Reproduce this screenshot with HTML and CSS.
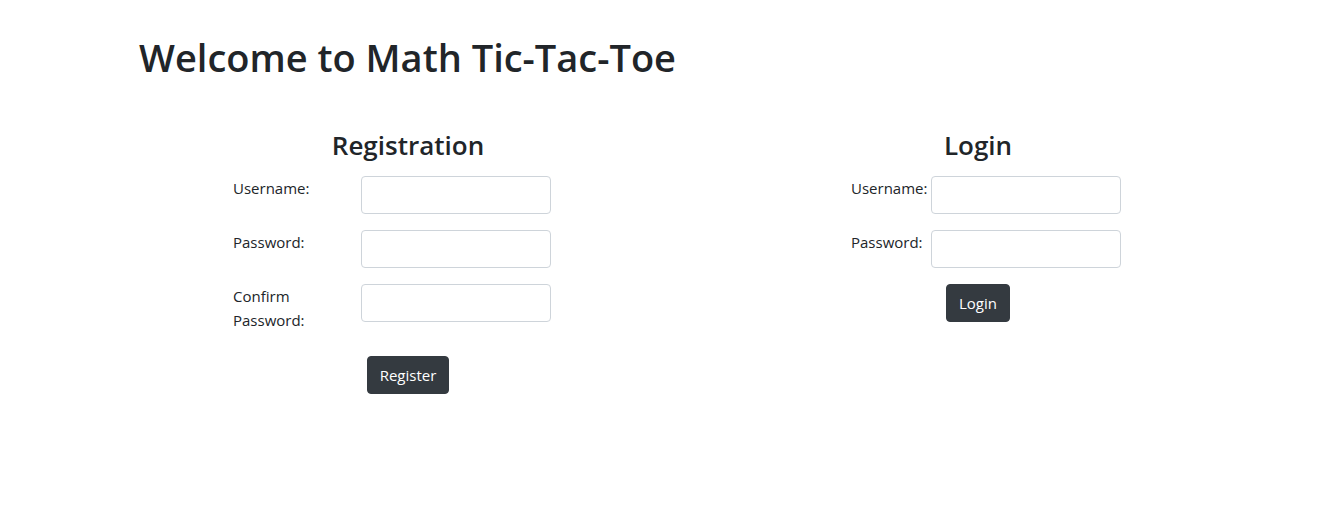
FILE: index.html
```html
<!DOCTYPE html>
<html lang="en">
<head>
<meta charset="utf-8">
<title>Math Tic-Tac-Toe</title>
<link rel="stylesheet" href="styles.css">
</head>
<body>
<div class="container">
  <h1 class="title">Welcome to Math Tic-Tac-Toe</h1>
  <div class="columns">
    <section class="panel">
      <h3 class="panel-title">Registration</h3>
      <form class="form form-register">
        <label class="label" for="r-user">Username:</label>
        <input class="input" id="r-user" type="text">
        <label class="label" for="r-pass">Password:</label>
        <input class="input" id="r-pass" type="password">
        <label class="label" for="r-conf">Confirm Password:</label>
        <input class="input" id="r-conf" type="password">
      </form>
      <button class="btn" type="button">Register</button>
    </section>
    <section class="panel">
      <h3 class="panel-title">Login</h3>
      <form class="form form-login">
        <label class="label" for="l-user">Username:</label>
        <input class="input" id="l-user" type="text">
        <label class="label" for="l-pass">Password:</label>
        <input class="input" id="l-pass" type="password">
      </form>
      <button class="btn" type="button">Login</button>
    </section>
  </div>
</div>
</body>
</html>
```

FILE: styles.css
```css
* { box-sizing: border-box; }

body {
  margin: 0;
  background: #fff;
  color: #212529;
  font-family: "Open Sans", "Noto Sans", sans-serif;
  font-size: 16px;
  line-height: 24px;
}

.container {
  width: 1140px;
  margin-left: 123px;
}

.title {
  margin: 33px 0 0;
  padding-left: 16px;
  font-size: 38px;
  line-height: 48px;
  font-weight: 600;
}

.columns {
  display: grid;
  grid-template-columns: 1fr 1fr;
  margin-top: 47px;
}

.panel {
  display: flex;
  flex-direction: column;
  align-items: center;
}

.panel-title {
  margin: 0 0 14px;
  font-size: 26px;
  line-height: 34px;
  font-weight: 600;
}

.form {
  align-self: flex-start;
  display: grid;
  row-gap: 16px;
  align-items: start;
}

.form-register {
  margin-left: 110px;
  grid-template-columns: 128px 190px;
}

.form-login {
  margin-left: 158px;
  grid-template-columns: 80px 190px;
}

.label {
  display: block;
  margin-bottom: 8px;
  padding-right: 40px;
  font-size: 15px;
  line-height: 24px;
}

.form-login .label {
  padding-right: 0;
  white-space: nowrap;
}

.input {
  width: 190px;
  height: 38px;
  margin: 0;
  border: 1px solid #ced4da;
  border-radius: 4px;
  background: #fff;
  font: inherit;
}

.btn {
  margin-top: 16px;
  height: 38px;
  padding: 6px 12px;
  border: 1px solid #343a40;
  border-radius: 4px;
  background: #343a40;
  color: #fff;
  font-family: inherit;
  font-size: 15px;
  line-height: 24px;
}
```
